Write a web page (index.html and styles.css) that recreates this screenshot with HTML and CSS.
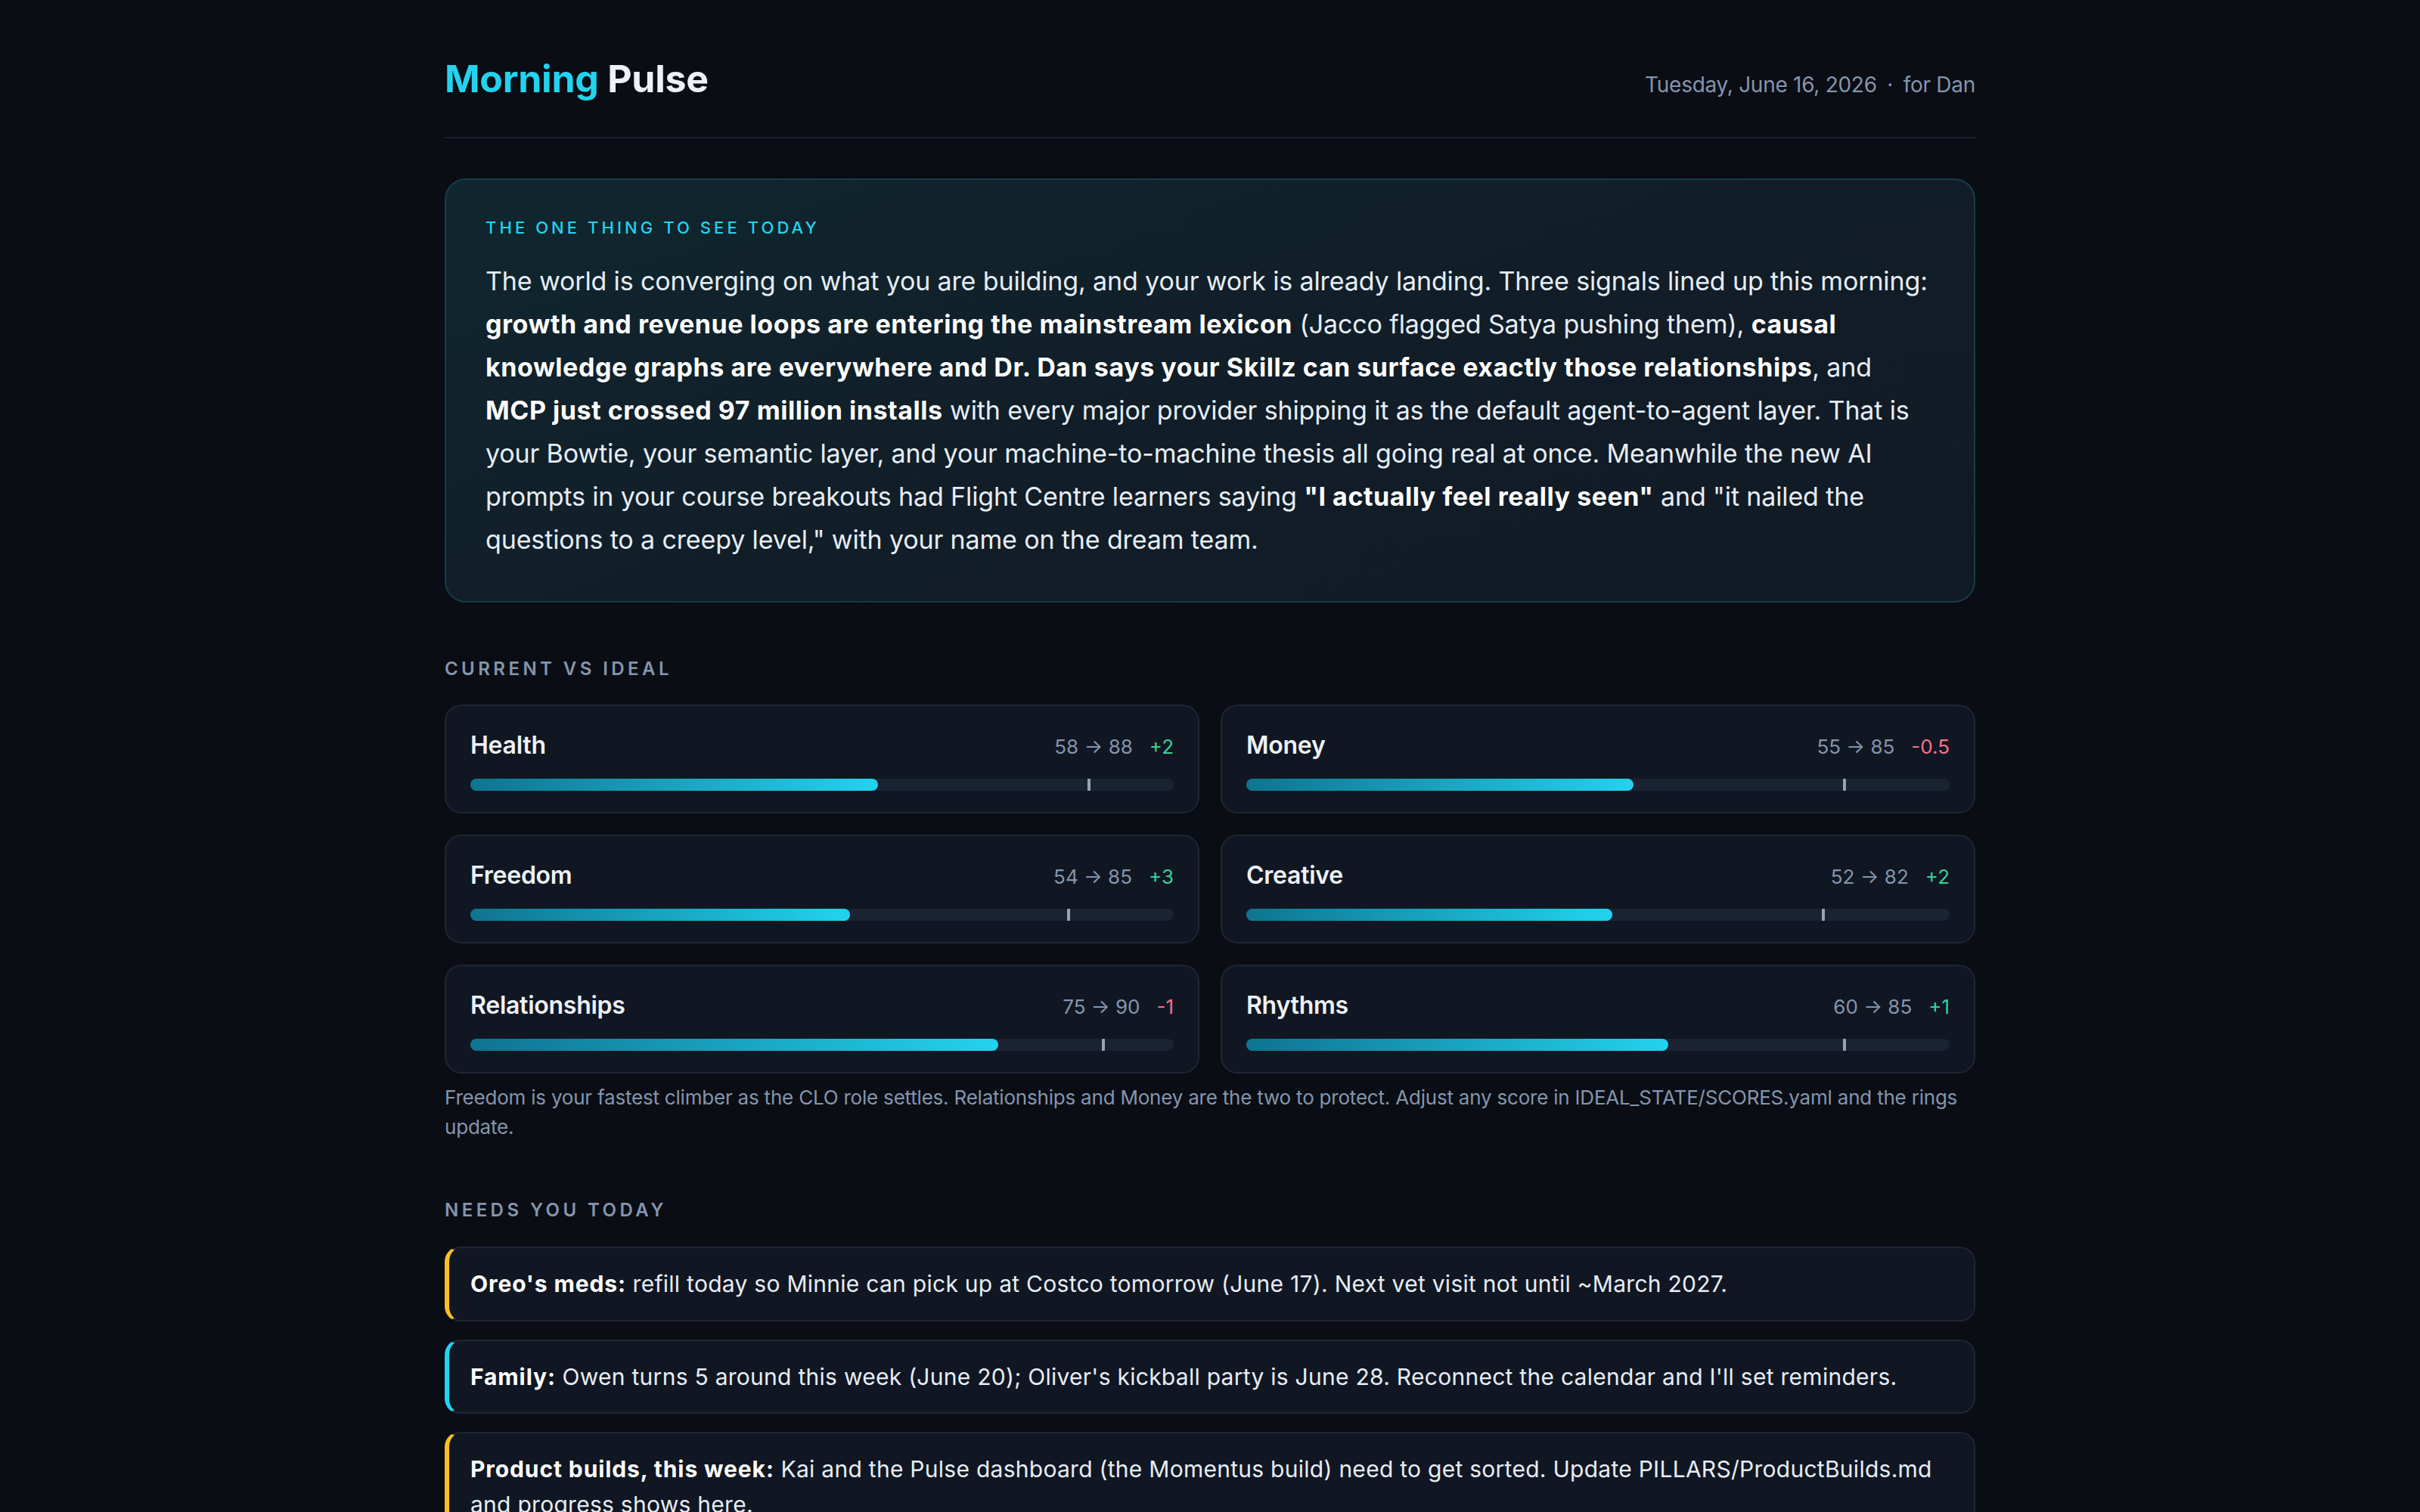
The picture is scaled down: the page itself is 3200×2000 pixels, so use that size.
FILE: index.html
```html
<!DOCTYPE html>
<html lang="en">
<head>
<meta charset="utf-8">
<title>Morning Pulse</title>
<link rel="stylesheet" href="styles.css">
</head>
<body>
<main class="page">
  <header class="masthead">
    <h1 class="brand"><span class="brand-accent">Morning</span> Pulse</h1>
    <div class="dateline">Tuesday, June 16, 2026 <span class="sep">·</span> for Dan</div>
  </header>

  <section class="hero">
    <div class="hero-label">The one thing to see today</div>
    <p class="hero-text">The world is converging on what you are building, and your work is already landing. Three signals lined up this morning: <strong>growth and revenue loops are entering the mainstream lexicon</strong> (Jacco flagged Satya pushing them), <strong>causal knowledge graphs are everywhere and Dr. Dan says your Skillz can surface exactly those relationships</strong>, and <strong>MCP just crossed 97 million installs</strong> with every major provider shipping it as the default agent-to-agent layer. That is your Bowtie, your semantic layer, and your machine-to-machine thesis all going real at once. Meanwhile the new AI prompts in your course breakouts had Flight Centre learners saying <strong>"I actually feel really seen"</strong> and "it nailed the questions to a creepy level," with your name on the dream team.</p>
  </section>

  <h2 class="section-title">Current vs ideal</h2>
  <div class="score-grid">
    <div class="score-card">
      <div class="score-head"><span class="score-name">Health</span><span class="score-vals">58 → 88<span class="delta up">+2</span></span></div>
      <div class="track"><div class="fill" style="width:58%"></div><div class="tick" style="left:88%"></div></div>
    </div>
    <div class="score-card">
      <div class="score-head"><span class="score-name">Money</span><span class="score-vals">55 → 85<span class="delta down">-0.5</span></span></div>
      <div class="track"><div class="fill" style="width:55%"></div><div class="tick" style="left:85%"></div></div>
    </div>
    <div class="score-card">
      <div class="score-head"><span class="score-name">Freedom</span><span class="score-vals">54 → 85<span class="delta up">+3</span></span></div>
      <div class="track"><div class="fill" style="width:54%"></div><div class="tick" style="left:85%"></div></div>
    </div>
    <div class="score-card">
      <div class="score-head"><span class="score-name">Creative</span><span class="score-vals">52 → 82<span class="delta up">+2</span></span></div>
      <div class="track"><div class="fill" style="width:52%"></div><div class="tick" style="left:82%"></div></div>
    </div>
    <div class="score-card">
      <div class="score-head"><span class="score-name">Relationships</span><span class="score-vals">75 → 90<span class="delta down">-1</span></span></div>
      <div class="track"><div class="fill" style="width:75%"></div><div class="tick" style="left:90%"></div></div>
    </div>
    <div class="score-card">
      <div class="score-head"><span class="score-name">Rhythms</span><span class="score-vals">60 → 85<span class="delta up">+1</span></span></div>
      <div class="track"><div class="fill" style="width:60%"></div><div class="tick" style="left:85%"></div></div>
    </div>
  </div>
  <p class="footnote">Freedom is your fastest climber as the CLO role settles. Relationships and Money are the two to protect. Adjust any score in IDEAL_STATE/SCORES.yaml and the rings update.</p>

  <h2 class="section-title">Needs you today</h2>
  <div class="needs">
    <div class="need need-amber"><strong>Oreo's meds:</strong> refill today so Minnie can pick up at Costco tomorrow (June 17). Next vet visit not until ~March 2027.</div>
    <div class="need need-cyan"><strong>Family:</strong> Owen turns 5 around this week (June 20); Oliver's kickball party is June 28. Reconnect the calendar and I'll set reminders.</div>
    <div class="need need-amber"><strong>Product builds, this week:</strong> Kai and the Pulse dashboard (the Momentus build) need to get sorted. Update PILLARS/ProductBuilds.md and progress shows here.</div>
  </div>
</main>
</body>
</html>
```

FILE: styles.css
```css
* {
  box-sizing: border-box;
}

html,
body {
  margin: 0;
  padding: 0;
  background: #0a0d14;
}

body {
  font-family: Inter, "Noto Sans", "Liberation Sans", sans-serif;
  color: #e6edf5;
}

.page {
  width: 2024px;
  margin: 0 auto;
  padding: 73px 0 120px;
}

/* Header */
.masthead {
  display: flex;
  justify-content: space-between;
  align-items: baseline;
  padding-bottom: 46px;
  border-bottom: 2px solid #1c2330;
}

.brand {
  margin: 0;
  font-size: 50px;
  line-height: 1.24;
  font-weight: 700;
  letter-spacing: -0.005em;
  color: #eef2f8;
}

.brand-accent {
  color: #22d3ee;
}

.dateline {
  font-size: 28px;
  letter-spacing: -0.01em;
  color: #8595ad;
}

.dateline .sep {
  margin: 0 6px;
}

/* Highlight card */
.hero {
  margin-top: 53px;
  padding: 48px 52px 52px;
  border: 2px solid #163d47;
  border-radius: 28px;
  background: linear-gradient(160deg, #10272f 0%, #111d27 55%, #121a25 100%);
}

.hero-label {
  font-size: 22px;
  line-height: 1.4;
  font-weight: 500;
  letter-spacing: 0.185em;
  text-transform: uppercase;
  color: #22d3ee;
  margin-bottom: 26px;
}

.hero-text {
  margin: 0;
  font-size: 34px;
  line-height: 1.68;
  letter-spacing: -0.004em;
  color: #e6edf5;
}

.hero-text strong {
  font-weight: 700;
  letter-spacing: 0.016em;
  color: #ffffff;
}

/* Section headings */
.section-title {
  margin: 74px 0 33px;
  font-size: 24px;
  line-height: 1.2;
  font-weight: 600;
  letter-spacing: 0.185em;
  text-transform: uppercase;
  color: #8595ad;
}

/* Score cards */
.score-grid {
  display: grid;
  grid-template-columns: 1fr 1fr;
  gap: 28px;
}

.score-card {
  padding: 28px 32px;
  background: #111722;
  border: 2px solid #1e2634;
  border-radius: 22px;
}

.score-head {
  display: flex;
  justify-content: space-between;
  align-items: baseline;
  line-height: 48px;
  margin-bottom: 18px;
}

.score-name {
  font-size: 32px;
  font-weight: 600;
  letter-spacing: -0.008em;
  color: #eef2f8;
}

.score-vals {
  font-size: 26px;
  color: #8595ad;
}

.delta {
  margin-left: 22px;
}

.delta.up {
  color: #34d399;
}

.delta.down {
  color: #fb7185;
}

.track {
  position: relative;
  height: 16px;
  border-radius: 8px;
  background: #1b2332;
}

.fill {
  height: 100%;
  border-radius: 8px;
  background: linear-gradient(90deg, #0e7490 0%, #22d3ee 100%);
}

.tick {
  position: absolute;
  top: 0;
  width: 4px;
  height: 16px;
  margin-left: -2px;
  background: #9aa3b2;
  border-radius: 1px;
}

.footnote {
  margin: 12px 0 77px;
  font-size: 26px;
  line-height: 1.5;
  letter-spacing: -0.008em;
  color: #8595ad;
}

/* Action items */
.needs {
  display: flex;
  flex-direction: column;
  gap: 24px;
}

.need {
  padding: 24px 28px;
  font-size: 30px;
  line-height: 1.55;
  letter-spacing: 0.009em;
  color: #e6edf5;
  background: #111722;
  border: 2px solid #1e2634;
  border-left-width: 6px;
  border-radius: 20px;
}

.need strong {
  font-weight: 700;
  letter-spacing: 0.03em;
  color: #ffffff;
}

.need-amber {
  border-left-color: #fbbf24;
}

.need-cyan {
  border-left-color: #22d3ee;
}
```
